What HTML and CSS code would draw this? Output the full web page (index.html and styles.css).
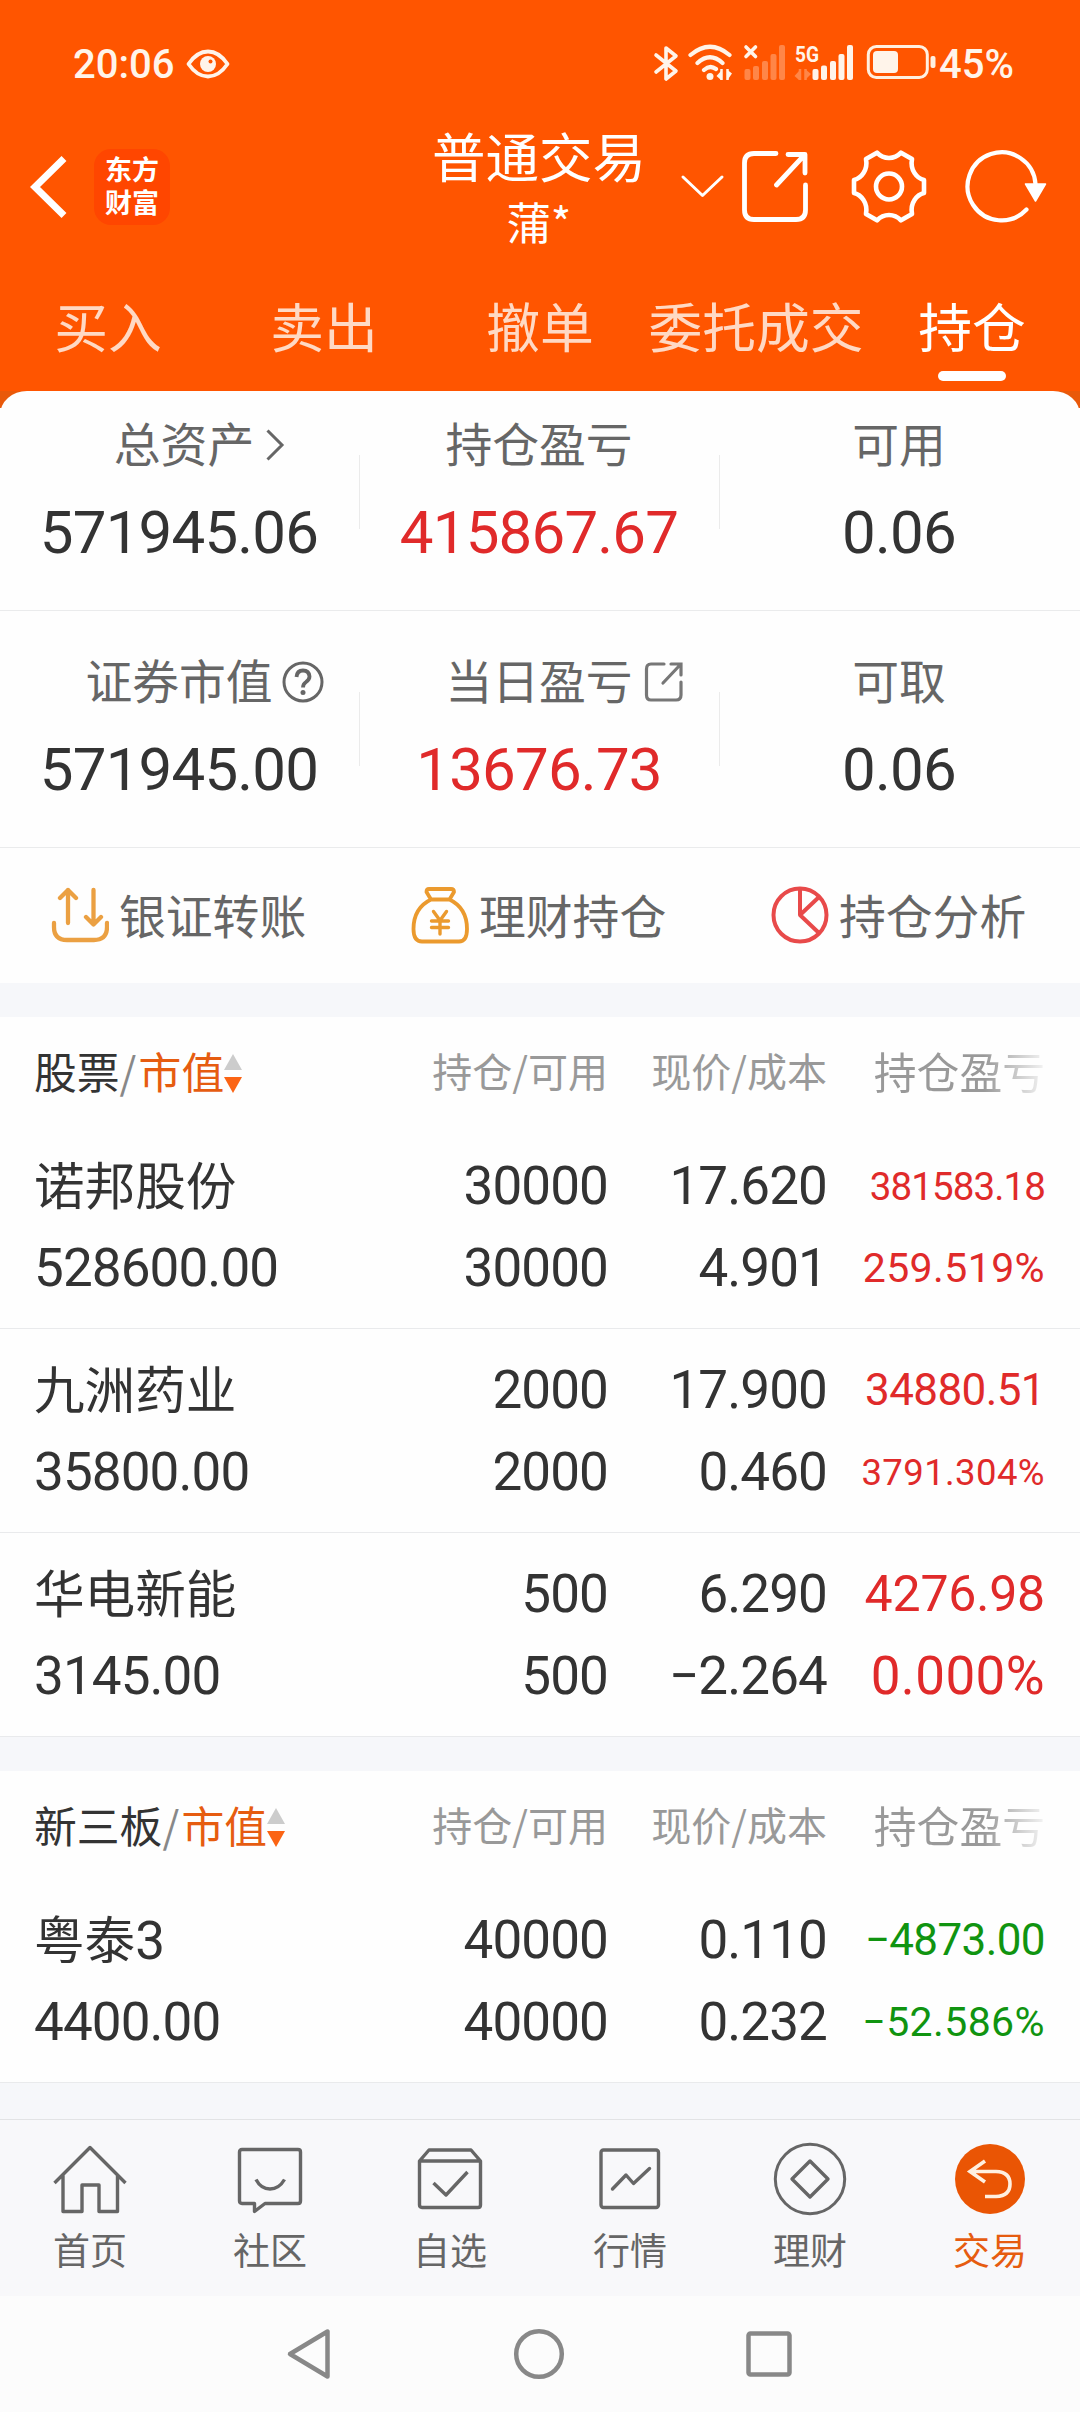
FILE: index.html
```html
<!DOCTYPE html>
<html lang="zh-CN">
<head>
<meta charset="utf-8">
<title>普通交易</title>
<link rel="stylesheet" href="styles.css">
</head>
<body>
<header class="top">
  <div class="status">
    <div class="status-left">
      <span class="clock">20:06</span>
      <svg class="eye" width="44" height="30" viewBox="0 0 44 30" fill="none"><path d="M2.500 15Q11 2.500 22 2.500T41.500 15Q33 27.500 22 27.500T2.500 15Z" stroke="#fff4ea" stroke-width="3.800" stroke-linejoin="round"/><circle cx="22" cy="15" r="8" fill="#fff4ea"/><circle cx="24.500" cy="12.500" r="2" fill="#f50"/></svg>
    </div>
    <div class="status-right">
      <svg class="signals" width="286" height="40" viewBox="651 43 286 40" fill="none" stroke-linecap="round" stroke-linejoin="round">
        <path d="M656 55L676 71L666 79V48L676 56L656 72" stroke="#fff4ea" stroke-width="3.600"/>
        <g stroke="#fff4ea" stroke-width="4.200"><path d="M690.500 55Q710 38.500 729.500 55M697.500 63Q710 51.500 722.500 63M704 70Q710 64.500 716 69"/></g>
        <circle cx="710" cy="76.500" r="3.500" fill="#fff4ea"/>
        <path d="M716.500 76L721 71V80ZM732 73.500L727.500 70V80Z" fill="#fff4ea"/><path d="M721.500 69V80M727.500 69V80" stroke="#fff4ea" stroke-width="2.500" stroke-linecap="butt"/>
        <path d="M746 47L755.500 56.500M755.500 47L746 56.500" stroke="#fff4ea" stroke-width="3.600"/>
        <g fill="#ff8648"><rect x="744.500" y="69" width="6" height="11" rx="2"/><rect x="753" y="66" width="6" height="14" rx="2"/><rect x="762" y="61" width="6" height="19" rx="2"/><rect x="770.500" y="54" width="6" height="26" rx="2"/><rect x="779" y="45" width="6" height="35" rx="2"/></g>
        <text class="net" x="795" y="62" textLength="24" lengthAdjust="spacingAndGlyphs">5G</text>
        <path d="M794.500 76L799 71V80ZM811 74L805 69V80Z" fill="#ff8648"/><path d="M800 69V80M805.500 69V80" stroke="#ff8648" stroke-width="2.500" stroke-linecap="butt"/>
        <g fill="#fff4ea"><rect x="812.500" y="69" width="6" height="11" rx="2"/><rect x="821" y="65.500" width="6" height="14.500" rx="2"/><rect x="830" y="61" width="6" height="19" rx="2"/><rect x="838.500" y="54" width="6" height="26" rx="2"/><rect x="847" y="45" width="6" height="35" rx="2"/></g>
        <rect x="868.300" y="46.500" width="59" height="31" rx="8" stroke="#fff0e0" stroke-width="3"/>
        <rect x="873" y="51" width="25" height="22" rx="4" fill="#fff4ea"/><rect x="930.500" y="56" width="5" height="12" rx="2" fill="#fff0e0"/>
      </svg>
      <span class="clock">45%</span>
    </div>
  </div>
  <div class="titlebar">
    <svg class="back" width="44" height="70" viewBox="26 152 44 70" fill="none"><path d="M64 158.500L35 187L64 215.500" stroke="#fff" stroke-width="7"/></svg>
    <div class="logo"><span>东方</span><span>财富</span></div>
    <div class="title"><div class="title-main">普通交易</div><div class="title-sub">蒲*</div></div>
    <svg class="tools" width="368" height="80" viewBox="680 147 368 80" fill="none" stroke="#fff" stroke-linecap="round" stroke-linejoin="round">
      <path d="M683 177L702.500 195.500L722 177" stroke-width="3"/>
      <path d="M776 153.500H754Q744.500 153.500 744.500 163V210Q744.500 219.500 754 219.500H796Q805.500 219.500 805.500 210V185M788 154.500H805V173M804 155.500L776.500 185" stroke-width="4.800"/>
      <path d="M889 158Q896 158 901 152.700L912 159Q910.500 167 914.500 173Q918 178.500 924 180V193Q918 194.500 914.500 200Q910.500 206 912 214L901 220.300Q896 215 889 215Q882 215 877 220.300L866 214Q867.500 206 863.500 200Q860 194.500 854 193V180Q860 178.500 863.500 173Q867.500 167 866 159L877 152.700Q882 158 889 158Z" stroke-width="4.600"/>
      <circle cx="889" cy="186.500" r="13" stroke-width="4.600"/>
      <path d="M1035.500 184A34 34 0 1 0 1026.500 209.500" stroke-width="4.200"/>
      <path d="M1025.500 184H1045.500L1035.500 201Z" fill="#fff" stroke-width="1.500"/>
    </svg>
  </div>
  <nav class="tabs"><span>买入</span><span>卖出</span><span>撤单</span><span>委托成交</span><span class="on">持仓</span></nav>
</header>

<div class="panel-wrap">
<section class="panel">
  <div class="stats stats-first">
    <div class="stat"><div class="label label-arrow">总资产<svg class="ic ic-arrow" width="20" height="34" viewBox="0 0 20 34" fill="none"><path d="M2.500 2.500L17 17L2.500 31.500" stroke="#666" stroke-width="3"/></svg></div><div class="value">571945.06</div></div>
    <div class="stat"><div class="label">持仓盈亏</div><div class="value red">415867.67</div></div>
    <div class="stat"><div class="label">可用</div><div class="value">0.06</div></div>
  </div>
  <div class="stats">
    <div class="stat"><div class="label">证券市值<svg class="ic ic-help" width="42" height="42" viewBox="0 0 42 42" fill="none"><circle cx="21" cy="21" r="19" stroke="#666" stroke-width="3"/><path d="M14.500 16Q15 9.500 21 9.500T27.500 15.500Q27.500 18.500 24 21Q21 23 21 26.500" stroke="#666" stroke-width="3.800"/><circle cx="21" cy="31.500" r="2.500" fill="#666"/></svg></div><div class="value">571945.00</div></div>
    <div class="stat"><div class="label">当日盈亏<svg class="ic ic-share" width="40" height="42" viewBox="0 0 40 42" fill="none" stroke="#777" stroke-width="3.200" stroke-linecap="round"><path d="M20 3H7Q2.500 3 2.500 8V34Q2.500 39 7 39H32Q37 39 37 34V21M27 3H37V14M36 4L19 22"/></svg></div><div class="value red">13676.73</div></div>
    <div class="stat"><div class="label">可取</div><div class="value">0.06</div></div>
  </div>
  <div class="actions">
    <div class="action"><svg width="58" height="60" viewBox="0 0 58 60" fill="none" stroke="#eba042" stroke-width="4.300" stroke-linecap="round" stroke-linejoin="round"><path d="M3 38V42Q3 55 16 55H43Q56 55 56 42V38M17 38V5M9 13L17 5L25 13M42.500 5V39M35 32L42.500 39.500L50 32"/></svg>银证转账</div>
    <div class="action"><svg width="58" height="60" viewBox="0 0 58 60" fill="none" stroke="#eb9a2e" stroke-width="3.800" stroke-linecap="round" stroke-linejoin="round"><path d="M20 14.500L15.500 7Q15.500 4 18 4H40Q43 4 43 7L38.500 14.500Q56 23 56 44Q56 56.500 48 56.500H11Q2.500 56.500 2.500 44Q2.500 23 20 14.500H38.500"/><path d="M22.500 26.500L29 35.500L35.500 26.500M29 35.500V49M20.500 36H37.500M20.500 42.500H37.500" stroke-width="3.400"/></svg>理财持仓</div>
    <div class="action"><svg width="58" height="60" viewBox="0 0 58 60" fill="none" stroke="#e84a4a" stroke-width="4" stroke-linejoin="round"><circle cx="29" cy="30" r="26.500"/><path d="M29 4V30L48 12M29 30L48 48"/></svg>持仓分析</div>
  </div>
</section>
</div>

<section class="group">
  <div class="row head"><div class="cat">股票<i>/</i><b>市值</b><svg width="20" height="42" viewBox="0 0 20 42"><path d="M10 2L19 18H1Z" fill="#ccc"/><path d="M1 25H19L10 41Z" fill="#fb6414"/></svg></div><div>持仓/可用</div><div>现价/成本</div><div class="fade">持仓盈亏</div></div>
  <div class="row item"><div class="name">诺邦股份</div><div>30000</div><div>17.620</div><div class="red s39">381583.18</div><div>528600.00</div><div>30000</div><div>4.901</div><div class="red s41 pct">259.519%</div></div>
  <div class="row item"><div class="name">九洲药业</div><div>2000</div><div>17.900</div><div class="red s44">34880.51</div><div>35800.00</div><div>2000</div><div>0.460</div><div class="red s36 pct">3791.304%</div></div>
  <div class="row item"><div class="name">华电新能</div><div>500</div><div>6.290</div><div class="red s50">4276.98</div><div>3145.00</div><div>500</div><div>−2.264</div><div class="red pct">0.000%</div></div>
</section>
<section class="group">
  <div class="row head"><div class="cat">新三板<i>/</i><b>市值</b><svg width="20" height="42" viewBox="0 0 20 42"><path d="M10 2L19 18H1Z" fill="#ccc"/><path d="M1 25H19L10 41Z" fill="#fb6414"/></svg></div><div>持仓/可用</div><div>现价/成本</div><div class="fade">持仓盈亏</div></div>
  <div class="row item"><div class="name">粤泰<span class="digit">3</span></div><div>40000</div><div>0.110</div><div class="green s44">−4873.00</div><div>4400.00</div><div>40000</div><div>0.232</div><div class="green s41 pct">−52.586%</div></div>
</section>

<nav class="bottom">
  <div><svg width="80" height="80" viewBox="0 0 80 80" fill="none" stroke="#666" stroke-width="3.400" stroke-linejoin="round"><path d="M4.500 44L40 8.500L75.500 44M13 36V72.500H32V46H49V72.500H67.500V36"/></svg>首页</div>
  <div><svg width="80" height="80" viewBox="0 0 80 80" fill="none" stroke="#666" stroke-width="3.400" stroke-linejoin="round"><path d="M12 10.500H68Q70.500 10.500 70.500 13V62Q70.500 64.500 68 64.500H35L24.500 72.500V64.500H12Q9.500 64.500 9.500 62V13Q9.500 10.500 12 10.500ZM26 40.500Q31 50 40 50T54.500 40.500"/></svg>社区</div>
  <div><svg width="80" height="80" viewBox="0 0 80 80" fill="none" stroke="#666" stroke-width="3.400" stroke-linejoin="round"><path d="M9.500 22L19 11H61L70.500 22V66Q70.500 68.500 68 68.500H12Q9.500 68.500 9.500 66ZM9.500 22H70.500M23.500 44L36 56L57.500 33"/></svg>自选</div>
  <div><svg width="80" height="80" viewBox="0 0 80 80" fill="none" stroke="#666" stroke-width="3.400" stroke-linejoin="round"><rect x="11" y="11" width="57.500" height="57.500" rx="2.500"/><path d="M22.500 50L36 36L43.500 44.500L59.500 29.500" stroke-linecap="round"/></svg>行情</div>
  <div><svg width="80" height="80" viewBox="0 0 80 80" fill="none" stroke="#666" stroke-width="3" stroke-linejoin="round"><circle cx="40" cy="40" r="34.700"/><path d="M40 22L58 40L40 58L22 40Z" stroke-width="3.400"/></svg>理财</div>
  <div class="on"><svg width="80" height="80" viewBox="0 0 80 80" fill="none" stroke="#fff0e0" stroke-width="3.600"><circle cx="40" cy="40" r="35" fill="#ea5504" stroke="none"/><path d="M20 32.500H46Q60 33 60 45T46 57.500H35M35 22L20 32.500L35 43"/></svg>交易</div>
</nav>
<footer class="sys">
  <svg width="60" height="60" viewBox="0 0 60 60" fill="none" stroke="#888" stroke-width="4.500" stroke-linejoin="round"><path d="M11 30L48.500 7.500V52.500Z"/></svg>
  <svg width="60" height="60" viewBox="0 0 60 60" fill="none" stroke="#888" stroke-width="4.500"><circle cx="30" cy="30" r="22.800"/></svg>
  <svg width="60" height="60" viewBox="0 0 60 60" fill="none" stroke="#888" stroke-width="4.500"><rect x="9.500" y="9.500" width="41" height="41" rx="2"/></svg>
</footer>
</body>
</html>
```
FILE: styles.css
```css
* { box-sizing: border-box; }
body { margin: 0; width: 1080px; background: #f6f7fa; color: #333; font-family: "Noto Sans CJK SC", sans-serif; }
svg { display: block; flex: none; }

.top { height: 391px; background: #ff5500; color: #fff; }
.status { height: 127px; padding: 0 66px 0 73px; display: flex; justify-content: space-between; }
.status-left, .status-right { display: flex; }
.clock { font: 500 40px/40px Roboto, sans-serif; color: #fff4ea; padding-top: 45px; }
.eye { margin: 49px 0 0 12px; }
.signals { margin-top: 43px; }
.status-right .clock { width: 75px; margin-left: 2px; }
.net { font: 700 22px Roboto, sans-serif; fill: #fff4ea; stroke: none; }

.titlebar { height: 156px; padding-left: 26px; display: flex; }
.back { margin-top: 25px; }
.logo { width: 76px; height: 76px; margin: 22px 0 0 24px; padding-top: 3px; border-radius: 17px; background: #ff4600; font-weight: 700; font-size: 27px; line-height: 33px; text-align: center; }
.logo span { display: block; }
.title { width: 220px; margin: -3px 31px 0 259px; text-align: center; }
.title-main { font-size: 53.500px; line-height: 62px; }
.title-sub { font-size: 44px; line-height: 70px; white-space: nowrap; }
.tools { margin-top: 20px; }

.tabs { display: grid; grid-template-columns: repeat(5, 216px); font-size: 53.800px; line-height: 84px; text-align: center; color: #ffd9c4; }
.tabs .on { color: #fff; }
.tabs .on::after { content: ""; display: block; width: 68px; height: 10px; margin: 4px auto 0; border-radius: 5px; background: #fff; }

.panel-wrap { background: linear-gradient(#e9590a 17px, #fefefe 17px); }
.panel { background: #fefefe; border-radius: 27px 27px 0 0 / 24px 24px 0 0; }
.stats { display: grid; grid-template-columns: repeat(3, 360px); height: 237px; border-bottom: 1px solid #eaebec; padding-top: 36px; }
.stats-first { height: 220px; padding-top: 19px; }
.stat { display: flex; flex-direction: column; align-items: center; background: linear-gradient(#ebebeb, #ebebeb) 359px 45px / 1px 74px no-repeat; }
.stat:last-child { background: none; }
.label { display: flex; align-items: center; justify-content: center; height: 70px; margin: -4px 2px 0 0; font-size: 46.800px; color: #666; }
.label-arrow { padding-left: 10px; }
.ic { margin-top: 7px; }
.ic-arrow { margin-left: 11px; margin-right: -31px; }
.ic-help { margin-left: 9px; margin-right: -51px; }
.ic-share { margin-left: 11px; margin-right: -51px; }
.value { font: 400 60px/70px Roboto, sans-serif; letter-spacing: -0.800px; margin: 22px 2px 0 0; }
.red { color: #e02a2a; }
.green { color: #109410; }

.actions { display: grid; grid-template-columns: repeat(3, 360px); height: 135px; }
.action { display: flex; align-items: center; gap: 10px; padding: 0 0 5px 51px; font-size: 46.800px; color: #666; }
.action svg { margin-top: 3px; }

.group { margin-top: 34px; background: #fefefe; }
.row { display: grid; grid-template-columns: 374px 200px 219px 218px; padding: 0 35px 0 34px; text-align: right; }
.row > :nth-child(4n+1) { text-align: left; }
.head { height: 108px; padding-bottom: 3px; align-items: center; font-size: 40px; color: #999; }
.cat { display: flex; align-items: center; font-size: 42.800px; color: #333; }
.cat svg { margin: 6px 0 0 -1px; }
.cat i { font-style: normal; color: #888; width: 19px; }
.cat b { font-weight: 400; color: #e65c10; }
.fade { font-size: 42.800px; background: linear-gradient(90deg, #999 72%, #f4f4f4 100%); background-clip: text; -webkit-background-clip: text; color: transparent; }
.item { height: 204px; padding-top: 20px; border-bottom: 1px solid #e9eaec; grid-auto-rows: 82px; font: 400 53px/83px Roboto, sans-serif; letter-spacing: -0.900px; }
.item .name { font-family: "Noto Sans CJK SC", sans-serif; font-size: 50.600px; line-height: 77px; letter-spacing: 0; }
.digit { font: 400 53px/1 Roboto, sans-serif; }
.item .pct { letter-spacing: 0.400px; }
.item .s36 { font-size: 36.500px; }
.item .s39 { font-size: 38.500px; }
.item .s41 { font-size: 41px; }
.item .s44 { font-size: 44px; letter-spacing: -0.600px; }
.item .s50 { font-size: 50px; letter-spacing: -0.200px; }

.bottom { margin-top: 36px; height: 177px; border-top: 1px solid #e2e3e5; background: #f8f8fa; display: grid; grid-template-columns: repeat(6, 180px); font-size: 37px; line-height: 61px; color: #666; text-align: center; }
.bottom svg { margin: 19px auto 0; }
.bottom .on { color: #e65c10; }
.sys { height: 116px; background: #fcfcfc; padding: 28px 281px 0 279px; display: flex; justify-content: space-between; }
```
